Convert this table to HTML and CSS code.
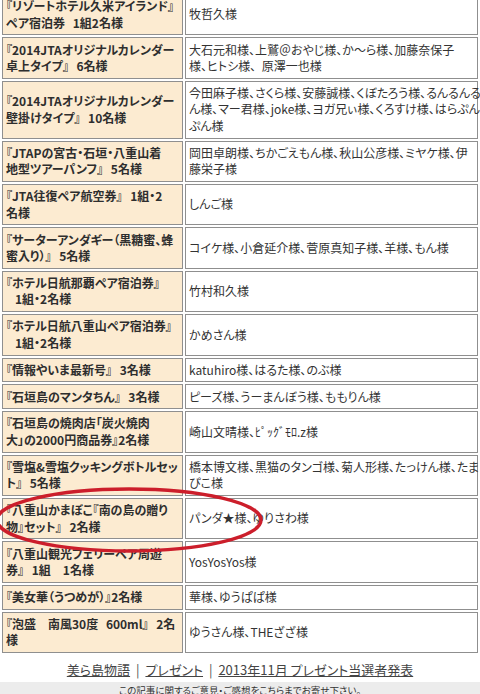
FILE: index.html
```html
<!DOCTYPE html>
<html lang="ja">
<head>
<meta charset="utf-8">
<title>2013年11月 プレゼント当選者発表</title>
<link rel="stylesheet" href="styles.css">
</head>
<body>
<table class="prizes">
  <tr><td class="item">『リゾートホテル久米アイランド』<br>ペア宿泊券 1組2名様</td><td class="winners">牧哲久様</td></tr>
  <tr><td class="item">『2014JTAオリジナルカレンダー<br>卓上タイプ』 6名様</td><td class="winners">大石元和様、上鷲＠おやじ様、か～ら様、加藤奈保子<br>様、ヒトシ様、 原澤一也様</td></tr>
  <tr><td class="item">『2014JTAオリジナルカレンダー<br>壁掛けタイプ』 10名様</td><td class="winners">今田麻子様、さくら様、安藤誠様、くぼたろう様、るんるんる<br>ん様、マー君様、joke様、ヨガ兄ぃ様、くろすけ様、はらぷん<br>ぷん様</td></tr>
  <tr><td class="item">『JTAPの宮古・石垣・八重山着<br>地型ツアーパンフ』 5名様</td><td class="winners">岡田卓朗様、ちかごえもん様、秋山公彦様、ミヤケ様、伊<br>藤栄子様</td></tr>
  <tr><td class="item">『JTA往復ペア航空券』 1組・2<br>名様</td><td class="winners">しんご様</td></tr>
  <tr><td class="item">『サーターアンダギー（黒糖蜜、蜂<br>蜜入り）』 5名様</td><td class="winners">コイケ様、小倉延介様、菅原真知子様、羊様、もん様</td></tr>
  <tr><td class="item">『ホテル日航那覇ペア宿泊券』<br><span class="indent">1組・2名様</span></td><td class="winners">竹村和久様</td></tr>
  <tr><td class="item">『ホテル日航八重山ペア宿泊券』<br><span class="indent">1組・2名様</span></td><td class="winners">かめさん様</td></tr>
  <tr><td class="item">『情報やいま最新号』 3名様</td><td class="winners">katuhiro様、はるた様、のぶ様</td></tr>
  <tr><td class="item">『石垣島のマンタちん』 3名様</td><td class="winners">ピーズ様、うーまんぼう様、ももりん様</td></tr>
  <tr><td class="item">『石垣島の焼肉店「炭火焼肉<br>大」の2000円商品券』2名様</td><td class="winners">崎山文晴様、ﾋﾟｯｸﾞﾓﾛ.z様</td></tr>
  <tr><td class="item">『雪塩&amp;雪塩クッキングボトルセッ<br>ト』 5名様</td><td class="winners">橋本博文様、黒猫のタンゴ様、菊人形様、たっけん様、たま<br>ぴこ様</td></tr>
  <tr><td class="item">『八重山かまぼこ『南の島の贈り<br>物』セット』 2名様</td><td class="winners">パンダ★様、ゆりさわ様</td></tr>
  <tr><td class="item">『八重山観光フェリーペア周遊<br>券』 1組　1名様</td><td class="winners">YosYosYos様</td></tr>
  <tr><td class="item">『美女華（うつめが）』2名様</td><td class="winners">華様、ゆうぱぱ様</td></tr>
  <tr><td class="item">『泡盛　南風30度 600ml』 2名<br>様</td><td class="winners">ゆうさん様、THEざざ様</td></tr>
</table>
<p class="crumbs"><a href="#">美ら島物語</a> | <a href="#">プレゼント</a> | <a href="#">2013年11月 プレゼント当選者発表</a></p>
<div class="feedback">この記事に関するご意見・ご感想をこちらまでお寄せ下さい。</div>
<svg class="annot" width="480" height="694" viewBox="0 0 480 694" aria-hidden="true">
  <ellipse cx="129" cy="520" rx="132" ry="31" fill="none" stroke="#cc1e2b" stroke-width="3.5"/>
</svg>
</body>
</html>
```
FILE: styles.css
```css
html, body {
  margin: 0;
  padding: 0;
  background: #fff;
}
body {
  position: relative;
  width: 480px;
  height: 694px;
  overflow: hidden;
  font-family: "Noto Sans CJK JP", "Noto Sans", sans-serif;
  font-feature-settings: "palt";
  color: #333;
}
.prizes {
  width: 480px;
  margin-top: -8px;
  border-collapse: separate;
  border-spacing: 2px;
  table-layout: fixed;
  font-size: 12px;
  line-height: 16.5px;
}
.prizes td {
  box-sizing: border-box;
  border: 1px solid #8f8f8f;
  padding: 3.2px 3px;
  vertical-align: middle;
  white-space: nowrap;
}
.item {
  width: 181px;
  background: #fcebd1;
  font-weight: bold;
  color: #2e2e2e;
  word-spacing: 5px;
}
.winners {
  width: 293px;
  background: #fff;
  word-spacing: 3px;
}
.indent {
  padding-left: 9px;
}
.crumbs {
  margin: 0;
  padding: 5px 0 1.5px;
  line-height: 20px;
  text-align: center;
  font-size: 13px;
  color: #555;
  word-spacing: 3px;
}
.crumbs a {
  color: #444;
  text-decoration: underline;
  word-spacing: 0;
}
.feedback {
  background: #ececec;
  height: 20px;
  padding-top: 1px;
  line-height: 14px;
  font-size: 9.5px;
  text-align: center;
  color: #333;
}
.annot {
  position: absolute;
  left: 0;
  top: 0;
  pointer-events: none;
}
```
